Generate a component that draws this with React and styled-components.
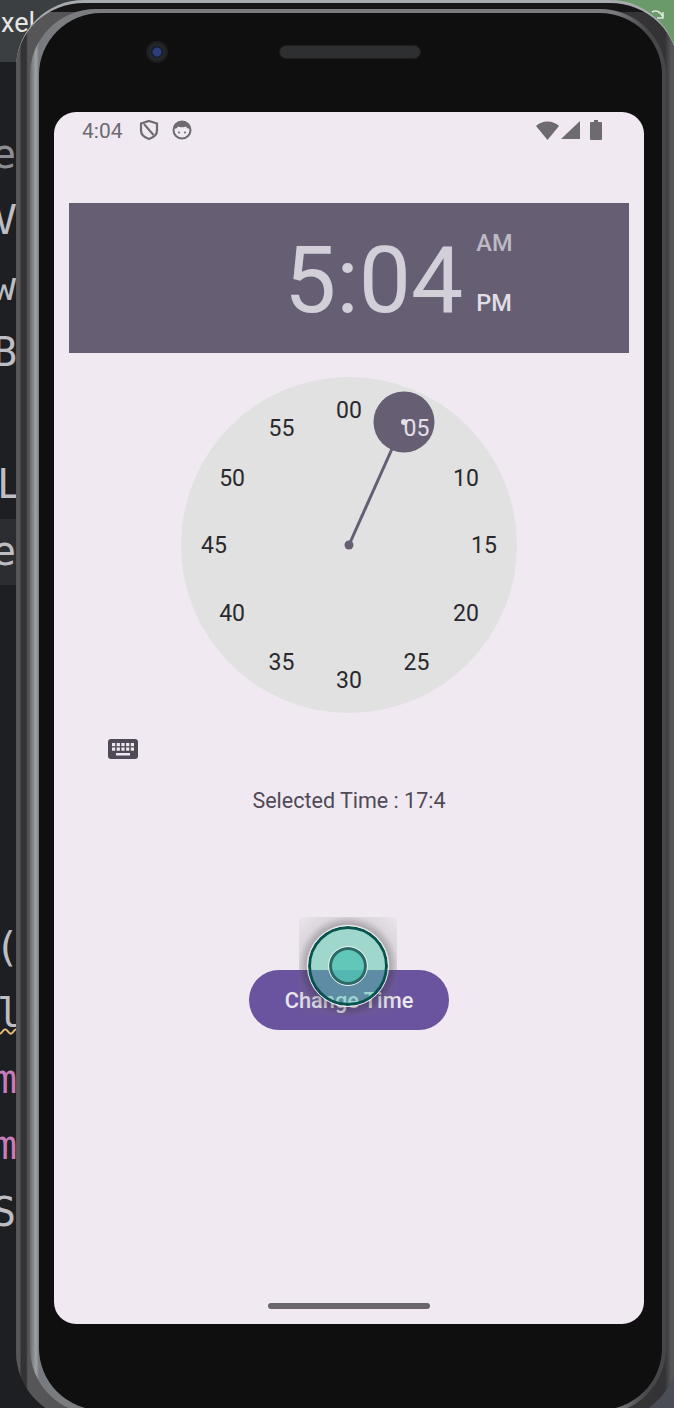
import styled, { createGlobalStyle } from "styled-components";

const GlobalStyle = createGlobalStyle`
  html, body {
    margin: 0;
    padding: 0;
    background: #1e1f22;
  }
  * {
    box-sizing: border-box;
  }
`;

const Desktop = styled.div`
  position: relative;
  width: 674px;
  height: 1408px;
  overflow: hidden;
  background: #1e1f22;
  font-family: Roboto, "Liberation Sans", sans-serif;
`;

const TitleBar = styled.div`
  height: 62px;
  background: #3c3f41;
  color: #e6e6e6;
  font-size: 27px;
  line-height: 46px;
  padding-left: 1px;
`;

const Gutter = styled.div`
  margin-top: 60px;
`;

const CodeRow = styled.div`
  height: 66.1px;
  line-height: 64px;
  font-family: "DejaVu Sans Mono", "Liberation Mono", monospace;
  font-size: 40px;
  white-space: pre;
  color: ${(props) => props.color || "#bcbec4"};
  background: ${(props) => (props.active ? "#2b2d30" : "transparent")};
  text-indent: ${(props) => props.shift}px;
  text-decoration: ${(props) => (props.warn ? "underline wavy #e5c07b 2px" : "none")};
`;

const GreenCorner = styled.div`
  position: absolute;
  right: 0;
  top: 0;
  width: 60px;
  height: 50px;
  padding: 7px 0 0 37px;
  background: #6a9a6a;
`;

const GreyCorner = styled.div`
  position: absolute;
  right: 0;
  bottom: 0;
  width: 60px;
  height: 60px;
  background: #4a4d55;
`;

const Shell = styled.div`
  position: absolute;
  left: 16px;
  top: 0;
  width: 662px;
  height: 1420px;
  padding: 6px 12px 6px 14px;
  border-radius: 68px;
  background:
    linear-gradient(180deg, #161617 0 9px, transparent 9px),
    linear-gradient(90deg, #565658 0 4px, #333335 5px 10px, #565658 12px 14px, #333335 98%, #565658 99%);
  border-top: 3px solid #a9acae;
`;

const Band = styled.div`
  height: 100%;
  padding: 4px 4px 4px 9px;
  border-radius: 66px;
  background: linear-gradient(90deg, #696b6f 0, #a0a3a6 6px, #777a7e 9px, #7a7c80 30px, #7a7c80 92%, #47474a 97%, #47474a 100%);
`;

const Body = styled.div`
  height: 100%;
  padding: 0 18px 0 15px;
  border-radius: 62px;
  background: #0f0f10;
`;

const Sensors = styled.div`
  height: 78px;
  margin-bottom: 21px;
  padding-left: 92px;
  display: flex;
  align-items: center;
  gap: 111px;
`;

const Camera = styled.div`
  width: 22px;
  height: 22px;
  border-radius: 50%;
  background: radial-gradient(circle, #2c3d78 0 4px, #141a30 5px, #26272b 7px, #1b1b1e 11px);
`;

const Speaker = styled.div`
  width: 142px;
  height: 14px;
  border-radius: 7px;
  background: #2e2f30;
  border: 1px solid #1d1d1e;
`;

const Screen = styled.div`
  position: relative;
  height: 1212px;
  border-radius: 22px;
  background: #f0e9f1;
  display: flex;
  flex-direction: column;
  align-items: center;
  overflow: hidden;
`;

const StatusBar = styled.div`
  align-self: stretch;
  height: 36px;
  padding: 0 42px 0 28px;
  display: flex;
  align-items: center;
  color: #6d6a70;
  font-size: 21px;
  margin-bottom: 55px;
`;

const StatusTime = styled.span`
  margin-right: 15px;
  position: relative;
  top: 1px;
`;

const StatusIcons = styled.div`
  margin-left: auto;
  display: flex;
  align-items: center;
  gap: 2px;
`;

const Header = styled.div`
  align-self: stretch;
  height: 150px;
  margin: 0 15px;
  padding-left: 215px;
  background: #665f74;
  display: flex;
  align-items: center;
  gap: 13px;
`;

const BigTime = styled.div`
  font-size: 93px;
  line-height: 1;
  color: #d3cfd9;
  white-space: nowrap;
  position: relative;
  top: 2px;
`;

const Period = styled.div`
  display: flex;
  flex-direction: column;
  gap: 32px;
  margin-top: -11px;
  font-size: 23.5px;
  line-height: 28px;
  font-weight: 500;
`;

const PeriodLabel = styled.span`
  color: ${(props) => (props.selected ? "#e2dee7" : "#bdb9c5")};
`;

const Dial = styled.div`
  position: relative;
  width: 336px;
  height: 336px;
  margin-top: 24px;
  flex-shrink: 0;
  border-radius: 50%;
  background: #e1e1e1;
`;

const Tick = styled.span`
  position: absolute;
  transform: translate(-50%, -50%);
  font-size: 23px;
  line-height: 1;
  color: ${(props) => (props.selected ? "#e4e0ea" : "#2a292e")};
`;

const HandLayer = styled.svg`
  position: absolute;
  inset: 0;
`;

const KeyboardRow = styled.div`
  align-self: stretch;
  padding-left: 54px;
  margin-top: 25px;
  height: 22px;
  display: flex;
  align-items: center;
`;

const SelectedTime = styled.div`
  margin-top: 29px;
  font-size: 21.5px;
  line-height: 24px;
  color: #4f4a55;
`;

const ChangeButton = styled.div`
  width: 200px;
  height: 60px;
  margin-top: 157px;
  border-radius: 30px;
  background: #6a539f;
  color: #ebe7f2;
  font-size: 21.8px;
  font-weight: 500;
  display: flex;
  align-items: center;
  justify-content: center;
`;

const HomeBar = styled.div`
  position: absolute;
  left: 214px;
  bottom: 15px;
  width: 162px;
  height: 6px;
  border-radius: 3px;
  background: #68656b;
`;

const TouchGlow = styled.div`
  position: absolute;
  left: 245px;
  top: 805px;
  width: 98px;
  height: 98px;
  background: radial-gradient(circle at 50% 50%, rgba(60, 60, 60, 0) 0 39px, rgba(60, 60, 60, 0.36) 42px, rgba(110, 110, 110, 0.16) 50px, rgba(120, 120, 120, 0.04) 68px);
`;

const TouchOuter = styled.div`
  position: absolute;
  left: 254px;
  top: 814px;
  width: 80px;
  height: 80px;
  border-radius: 50%;
  border: 3.5px solid #06544d;
  outline: 1.5px solid #f2f2f2;
  background: rgba(80, 198, 170, 0.5);
  display: flex;
  align-items: center;
  justify-content: center;
`;

const TouchInner = styled.div`
  width: 38px;
  height: 38px;
  border-radius: 50%;
  border: 3.5px solid #2d6a66;
  outline: 1.5px solid #e8f0ef;
  background: rgba(80, 195, 180, 0.8);
`;

const rows = [
  { text: "e", color: "#8c8e94", shift: -8 },
  { text: "V", shift: -7 },
  { text: "w", shift: -8 },
  { text: "B", shift: -7 },
  { text: " ", shift: 0 },
  { text: "L", shift: -3 },
  { text: "e", active: true, shift: -8 },
  { text: " ", shift: 0 },
  { text: " ", shift: 0 },
  { text: " ", shift: 0 },
  { text: " ", shift: 0 },
  { text: " ", shift: 0 },
  { text: "(", shift: -5 },
  { text: "l", warn: true, shift: -3 },
  { text: "m", color: "#c77dbb", shift: -7 },
  { text: "m", color: "#c77dbb", shift: -7 },
  { text: "S", shift: -8 },
];

const minutes = ["00", "05", "10", "15", "20", "25", "30", "35", "40", "45", "50", "55"];

const ClockDial = () => (
  <Dial>
    <HandLayer width="336" height="336" viewBox="0 0 336 336">
      <line x1="168" y1="168" x2="223" y2="45" stroke="#665f74" strokeWidth="3" />
      <circle cx="168" cy="168" r="4.5" fill="#665f74" />
      <circle cx="223" cy="45" r="30.5" fill="#665f74" />
      <circle cx="223" cy="45" r="3" fill="#e4e0ea" />
    </HandLayer>
    {minutes.map((label, i) => {
      const angle = (i * Math.PI) / 6;
      return (
        <Tick
          key={label}
          selected={label === "05"}
          style={{ left: 168 + 135 * Math.sin(angle), top: 168 - 135 * Math.cos(angle) }}
        >
          {label}
        </Tick>
      );
    })}
  </Dial>
);

const App = () => (
  <Desktop>
    <GlobalStyle />
    <TitleBar>xel</TitleBar>
    <Gutter>
      {rows.map((row, i) => (
        <CodeRow key={i} color={row.color} active={row.active} shift={row.shift} warn={row.warn}>
          {row.text}
        </CodeRow>
      ))}
    </Gutter>
    <GreenCorner>
      <svg width="14" height="12" viewBox="0 0 14 12" fill="none">
        <path d="M1 2c4-2 8-1 11 5M12 2v6H6" stroke="#dfe9df" strokeWidth="1.5" />
      </svg>
    </GreenCorner>
    <GreyCorner />
    <Shell>
      <Band>
        <Body>
          <Sensors>
            <Camera />
            <Speaker />
          </Sensors>
          <Screen>
            <StatusBar>
              <StatusTime>4:04</StatusTime>
              <svg width="22" height="22" viewBox="0 0 22 22" fill="none">
                <path d="M11 2 19 4.5v7c0 3.6-3 6.8-8 8.5-5-1.7-8-4.9-8-8.5v-7z" stroke="#6d6a70" strokeWidth="2.2" />
                <path d="M6 5l9.5 11" stroke="#6d6a70" strokeWidth="2" />
              </svg>
              <svg style={{ marginLeft: 11 }} width="22" height="22" viewBox="0 0 22 22" fill="none">
                <circle cx="11" cy="11" r="8.5" stroke="#6d6a70" strokeWidth="2" />
                <path d="M3.5 10C4 5 7 2.5 11 2.5S18 5 18.5 10c-2-.5-3-1.500-3.500-2.500-1.500 1-6.500 1-8 0C6.500 8.500 5.500 9.500 3.500 10z" fill="#6d6a70" />
                <circle cx="8" cy="13.5" r="1" fill="#6d6a70" />
                <circle cx="14" cy="13.5" r="1" fill="#6d6a70" />
              </svg>
              <StatusIcons>
                <svg width="23" height="19" viewBox="0 0 23 19">
                  <path d="M0 5C3 2 7 .5 11.500 .5S20 2 23 5L11.500 19z" fill="#6d6a70" />
                </svg>
                <svg width="19" height="18" viewBox="0 0 19 18">
                  <path d="M19 0v18H0z" fill="#6d6a70" />
                </svg>
                <svg style={{ marginLeft: 8 }} width="12" height="20" viewBox="0 0 12 20">
                  <path d="M4 0h4v2h3a1 1 0 0 1 1 1v16a1 1 0 0 1-1 1H1a1 1 0 0 1-1-1V3a1 1 0 0 1 1-1h3z" fill="#6d6a70" />
                </svg>
              </StatusIcons>
            </StatusBar>
            <Header>
              <BigTime>5:04</BigTime>
              <Period>
                <PeriodLabel>AM</PeriodLabel>
                <PeriodLabel selected>PM</PeriodLabel>
              </Period>
            </Header>
            <ClockDial />
            <KeyboardRow>
              <svg width="30" height="20" viewBox="0 0 30 20">
                <rect width="30" height="20" rx="3" fill="#4f4a55" />
                {[0, 1, 2, 3, 4].map((col) =>
                  [0, 1].map((line) => (
                    <rect key={`${col}-${line}`} x={4 + col * 4.7} y={4 + line * 4.5} width="3.2" height="3.2" fill="#f0e9f1" />
                  ))
                )}
                <rect x="8" y="14" width="14" height="2.5" fill="#f0e9f1" />
              </svg>
            </KeyboardRow>
            <SelectedTime>Selected Time : 17:4</SelectedTime>
            <ChangeButton>Change Time</ChangeButton>
            <HomeBar />
            <TouchGlow />
            <TouchOuter>
              <TouchInner />
            </TouchOuter>
          </Screen>
        </Body>
      </Band>
    </Shell>
  </Desktop>
);

export default App;
